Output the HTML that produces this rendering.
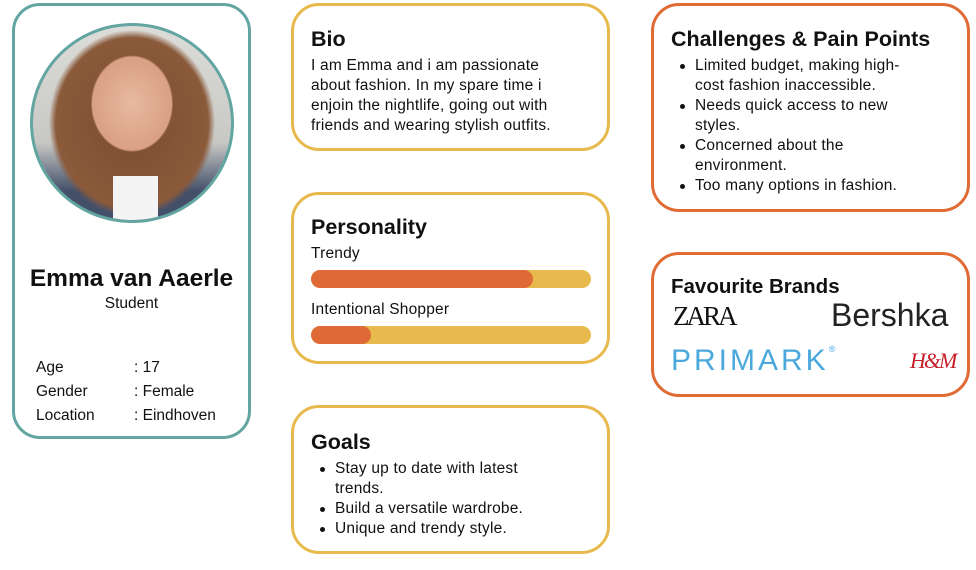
<!DOCTYPE html>
<html><head><meta charset="utf-8"><style>
*{margin:0;padding:0;box-sizing:border-box}
body{width:976px;height:570px;background:#fff;position:relative;font-family:"Liberation Sans",sans-serif;color:#111;overflow:hidden}
.card{position:absolute;border:3px solid;border-radius:28px;background:#fff}
.y{border-color:#e8b94c}.o{border-color:#e06b35}.t{border-color:#62a5a1}
h2{position:absolute;font-size:21.5px;font-weight:bold;left:17px;top:18px;white-space:nowrap}
p,li{font-size:15.5px;line-height:20px;letter-spacing:0.2px}
.txt{position:absolute;left:17px;top:46px;white-space:nowrap}
ul{list-style:none}
ul li{position:relative;padding-left:24px}
ul li:before{content:"";position:absolute;left:9px;top:8px;width:5px;height:5px;border-radius:50%;background:#111}
.bar{position:absolute;left:17px;width:280px;height:18px;border-radius:9px;background:#e8b94c;overflow:hidden}
.bar i{position:absolute;left:0;top:0;bottom:0;background:#df6a37;border-radius:9px}
</style></head><body>
<div class="card t" style="left:12px;top:3px;width:239px;height:436px">
  <div style="position:absolute;left:15px;top:17px;width:204px;height:200px;border-radius:50%;border:3px solid #62a5a1;overflow:hidden;background:radial-gradient(ellipse 40% 48% at 50% 40%,#e8b9a0 0%,#d9a084 50%,transparent 52%),radial-gradient(ellipse 70% 80% at 50% 50%,#7a4d30 0%,#8a5a3a 55%,transparent 60%),linear-gradient(#dcdcd8,#c8c8c4 60%,#44506a 85%)">
    <div style="position:absolute;left:80px;top:150px;width:45px;height:60px;background:#f4f4f4"></div>
  </div>
  <div style="position:absolute;left:0;right:0;top:259px;text-align:center;font-size:24.5px;font-weight:bold">Emma van Aaerle</div>
  <div style="position:absolute;left:0;right:0;top:289px;text-align:center;font-size:15.5px">Student</div>
  <div style="position:absolute;left:21px;top:350px;font-size:15.5px;line-height:24px">Age<br>Gender<br>Location</div>
  <div style="position:absolute;left:119px;top:350px;font-size:15.5px;line-height:24px">: 17<br>: Female<br>: Eindhoven</div>
</div>
<div class="card y" style="left:291px;top:3px;width:319px;height:148px">
  <h2 style="top:21px">Bio</h2>
  <p class="txt" style="top:50px">I am Emma and i am passionate<br>about fashion. In my spare time i<br>enjoin the nightlife, going out with<br>friends and wearing stylish outfits.</p>
</div>
<div class="card y" style="left:291px;top:192px;width:319px;height:172px">
  <h2 style="top:20px">Personality</h2>
  <p class="txt" style="top:49px">Trendy</p>
  <div class="bar" style="top:75px"><i style="width:222px"></i></div>
  <p class="txt" style="top:105px">Intentional Shopper</p>
  <div class="bar" style="top:131px"><i style="width:60px"></i></div>
</div>
<div class="card y" style="left:291px;top:405px;width:319px;height:149px">
  <h2 style="top:22px">Goals</h2>
  <ul class="txt" style="top:51px"><li>Stay up to date with latest<br>trends.</li><li>Build a versatile wardrobe.</li><li>Unique and trendy style.</li></ul>
</div>
<div class="card o" style="left:651px;top:3px;width:319px;height:209px">
  <h2 style="top:21px">Challenges &amp; Pain Points</h2>
  <ul class="txt" style="top:50px"><li>Limited budget, making high-<br>cost fashion inaccessible.</li><li>Needs quick access to new<br>styles.</li><li>Concerned about the<br>environment.</li><li>Too many options in fashion.</li></ul>
</div>
<div class="card o" style="left:651px;top:252px;width:319px;height:145px">
  <h2 style="top:20px;font-size:20.5px">Favourite Brands</h2>
  <div style="position:absolute;left:19px;top:46px;font-family:'Liberation Serif',serif;font-size:27px;letter-spacing:-3px">ZARA</div>
  <div style="position:absolute;left:177px;top:42px;font-size:32px;color:#222">Bershka</div>
  <div style="position:absolute;left:17px;top:89px;font-size:30px;color:#4aa8dc;letter-spacing:3px">PRIMARK<sup style="font-size:9px;vertical-align:top">®</sup></div>
  <div style="position:absolute;left:256px;top:93px;font-family:'Liberation Serif',serif;font-style:italic;font-size:22px;color:#c8202a;letter-spacing:-2px">H&amp;M</div>
</div>
</body></html>
